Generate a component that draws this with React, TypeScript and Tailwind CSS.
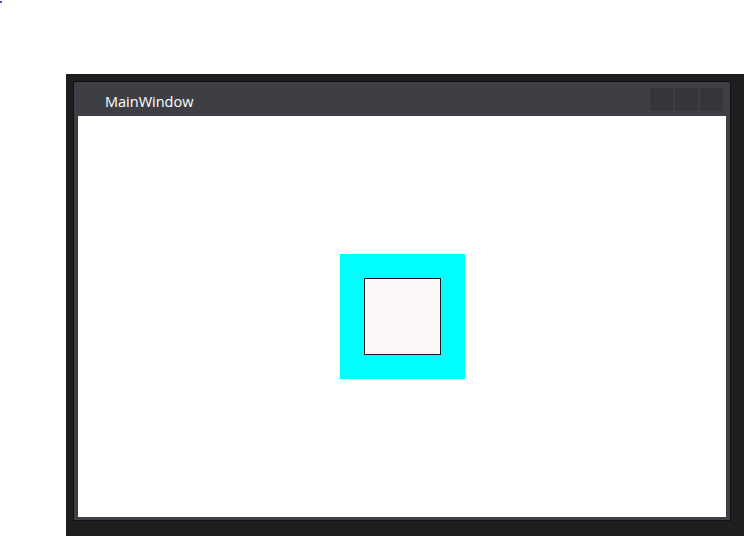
import React from "react";

export default function App() {
  return (
    <div className="relative w-[744px] h-[536px] bg-white overflow-hidden" style={{ fontFamily: '"Open Sans", "Liberation Sans", sans-serif' }}>
      <div className="absolute left-0 top-[1px] w-[2px] h-[2px] bg-[#4a4aff]" />
      <div className="pt-[74px] pl-[66px] h-full">
        <div className="w-[700px] h-[462px] bg-[#1e1e1e] pt-[7px] pl-[7px]">
          <div className="w-[658px] h-[440px] border border-[#111] bg-[#3e3f44] flex flex-col">
            <div className="h-[34px] flex items-center justify-between shrink-0">
              <span className="text-white text-[14.5px] pl-[31px] pt-[6px]">MainWindow</span>
              <div className="flex gap-[2px] pr-[7px] pt-[1px]">
                <div className="w-[23px] h-[23px] bg-[#35363a]" />
                <div className="w-[23px] h-[23px] bg-[#35363a]" />
                <div className="w-[23px] h-[23px] bg-[#35363a]" />
              </div>
            </div>
            <div className="mx-[4px] mb-[3px] flex-1 bg-white flex items-center justify-center">
              <div className="w-[125px] h-[125px] bg-[#00ffff] flex items-center justify-center">
                <div className="w-[77px] h-[77px] border border-[#1c1c1c] bg-[#fdf9f8]" />
              </div>
            </div>
          </div>
        </div>
      </div>
    </div>
  );
}
